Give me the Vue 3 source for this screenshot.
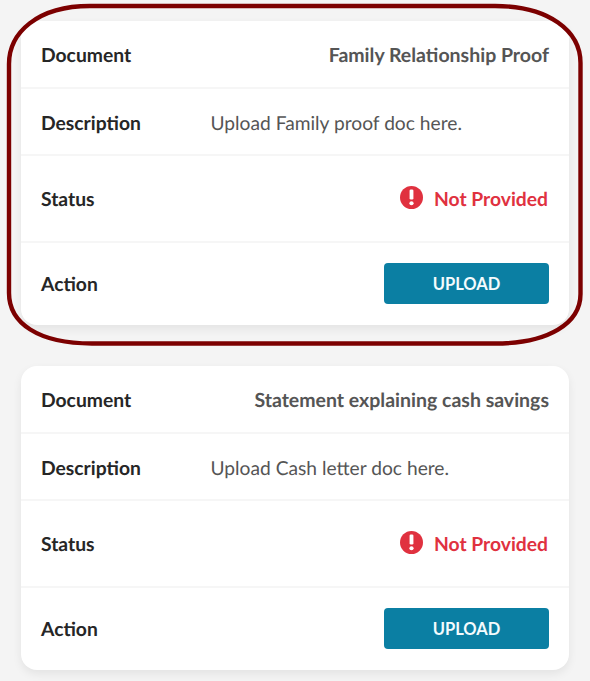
<script setup>
const cards = [
  { doc: 'Family Relationship Proof', desc: 'Upload Family proof doc here.' },
  { doc: 'Statement explaining cash savings', desc: 'Upload Cash letter doc here.' }
]
</script>

<template>
  <div class="page">
    <section v-for="c in cards" :key="c.doc" class="card">
      <div class="row r1">
        <span class="label">Document</span>
        <span class="doc">{{ c.doc }}</span>
      </div>
      <div class="row r2">
        <span class="label">Description</span>
        <span class="desc">{{ c.desc }}</span>
      </div>
      <div class="row r3">
        <span class="label">Status</span>
        <span class="status">
          <svg class="alert" viewBox="0 0 24 24" width="23" height="23" aria-hidden="true">
            <circle cx="12" cy="12" r="12" fill="#e0313f" />
            <rect x="10" y="3.6" width="4" height="10.6" rx="1.4" fill="#fff" />
            <circle cx="12" cy="18" r="2.2" fill="#fff" />
          </svg>
          Not Provided
        </span>
      </div>
      <div class="row r4">
        <span class="label">Action</span>
        <button class="upload" type="button">UPLOAD</button>
      </div>
    </section>
    <svg class="mark" width="590" height="350" viewBox="0 0 590 350" aria-hidden="true">
      <path d="M90 6 H495 C549 6 580.5 31 580.5 63 V294 C580.5 323 549 343.5 495 343.5 H92 C38 343.5 9 323 9 293 V64 C9 33 37 6 90 6 Z"
        fill="none" stroke="#7c0000" stroke-width="4.4" />
    </svg>
  </div>
</template>

<style scoped>
.page {
  position: relative;
  box-sizing: border-box;
  width: 590px;
  height: 681px;
  padding: 21px 21px 0;
  display: flex;
  flex-direction: column;
  gap: 41px;
  background: #f4f4f4;
  overflow: hidden;
  font-family: Lato, "Open Sans", sans-serif;
  text-rendering: geometricPrecision;
}
.card {
  background: #fff;
  border-radius: 16px;
  box-shadow: 0 4px 10px rgba(0, 0, 0, 0.07);
  display: flex;
  flex-direction: column;
}
.row {
  box-sizing: border-box;
  display: flex;
  align-items: center;
  justify-content: space-between;
  padding: 0 20px;
  border-bottom: 2px solid #f6f6f6;
}
.r1 { height: 68px; padding-top: 3px; }
.r2 { height: 67px; padding-top: 3px; justify-content: flex-start; }
.r3 { height: 87px; padding-top: 2px; }
.r4 { height: 82px; border-bottom: 0; }
.label {
  font-size: 19.3px;
  font-weight: 700;
  color: #262626;
}
.r2 .label { width: 169.5px; }
.doc {
  font-size: 19.5px;
  font-weight: 700;
  color: #555;
}
.desc {
  font-size: 19.2px;
  color: #555;
}
.status {
  display: flex;
  align-items: center;
  gap: 11px;
  margin-right: 1px;
  font-size: 19.3px;
  font-weight: 700;
  color: #e0313f;
}
.alert {
  display: block;
  transform: translateY(-2px);
}
.upload {
  width: 165px;
  height: 41px;
  margin-bottom: 2px;
  padding: 1px 0 0;
  border: 0;
  border-radius: 4px;
  background: #0b7fa3;
  color: #f4fbfd;
  font: 700 16.5px Lato, "Open Sans", sans-serif;
}
.mark {
  position: absolute;
  left: 0;
  top: 0;
  pointer-events: none;
}
</style>
